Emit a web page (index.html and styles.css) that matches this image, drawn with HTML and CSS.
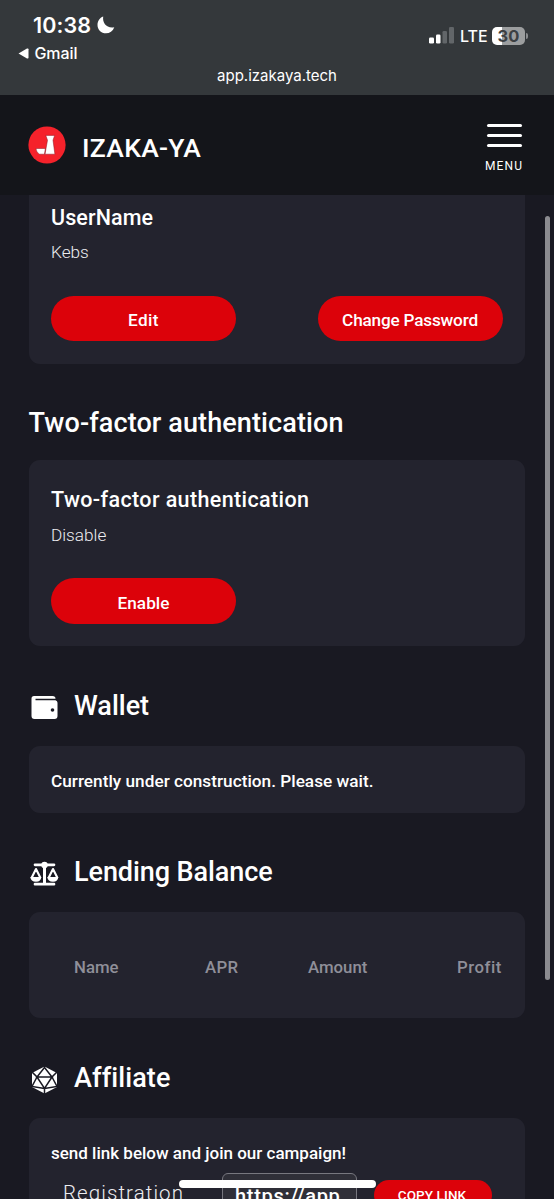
FILE: index.html
```html
<!DOCTYPE html>
<html lang="en">
<head>
<meta charset="utf-8">
<title>IZAKA-YA</title>
<link rel="stylesheet" href="styles.css">
</head>
<body>
<div class="status">
  <div class="status-row">
    <div class="status-left">
      <div class="clock"><span class="time">10:38</span>
        <svg class="moon" width="18" height="18" viewBox="0 0 18 18"><path d="M6.2.5C5.300 7 9.500 12.600 17.300 11.300C15.800 15.300 12.700 17.300 9 17.300C4.200 17.300.5 13.700.5 9C.5 5 2.700 1.800 6.200.5Z" fill="#fff"/></svg>
      </div>
      <div class="back"><svg width="11" height="11" viewBox="0 0 11 11"><path d="M.5 5.500L9 .6Q10.500 0 10.500 1.200V9.800Q10.500 11 9 10.400Z" fill="#fff"/></svg><span class="gmail">Gmail</span></div>
    </div>
    <div class="status-right">
      <svg width="26" height="17" viewBox="0 0 26 17"><g fill="#fff"><rect x="0" y="10.500" width="5" height="6" rx="1.300"/><rect x="7" y="7.500" width="4.500" height="9" rx="1.300"/></g><g fill="#626669"><rect x="13.500" y="4" width="4.500" height="12.500" rx="1.300"/><rect x="20" y="0" width="5" height="16.500" rx="1.300"/></g></svg>
      <span class="lte">LTE</span>
      <div class="battery">30</div><div class="nub"></div>
    </div>
  </div>
  <div class="url">app.izakaya.tech</div>
</div>
<header class="header">
  <div class="brand">
    <svg width="38" height="38" viewBox="0 0 38 38"><circle cx="19" cy="19" r="18.600" fill="#f5222b"/><path d="M17.800 9.400H26.600L25 14.200L26.900 28.200H17L19.500 14.200ZM8 22.500H17.300L16.500 28.200H11.600Q8.300 26.800 8 22.500Z" fill="#fff" stroke="#8c1420" stroke-width=".5"/></svg>
    <span class="brand-name">IZAKA-YA</span>
  </div>
  <div class="menu"><div class="bars"><i></i><i></i><i></i></div><span class="menu-label">MENU</span></div>
</header>
<main>
  <section class="card user">
    <h3>UserName</h3><p class="value">Kebs</p>
    <div class="actions"><button class="btn edit">Edit</button><button class="btn change">Change Password</button></div>
  </section>
  <h2 class="tfa">Two-factor authentication</h2>
  <section class="card tfa-card">
    <h3 class="tfa-sub">Two-factor authentication</h3><p class="value">Disable</p>
    <div class="actions"><button class="btn">Enable</button></div>
  </section>
  <h2 class="with-icon"><svg width="30" height="30" viewBox="0 0 30 30"><path d="M5 3H23.500Q26.500 3 26.500 5.800H6.500V7.300H26.500Q28.500 7.800 28.500 9.800V23Q28.500 26 25.500 26H5.500Q2.500 26 2.500 23V5.500Q2.500 3 5 3Z" fill="#fff"/><circle cx="23.500" cy="17" r="1.800" fill="#191922"/></svg><span class="wallet">Wallet</span></h2>
  <section class="card notice">Currently under construction. Please wait.</section>
  <h2 class="with-icon"><svg width="30" height="30" viewBox="0 0 30 30"><g fill="none" stroke="#fff"><path d="M6 5.800H25M6 25.200H25" stroke-width="2.700" stroke-linecap="round"/><path d="M15.500 5V25" stroke-width="3"/><path d="M2.500 19L7 10L11.500 19M19.500 19L24 10L28.500 19" stroke-width="2.100" stroke-linejoin="round"/></g><g fill="#fff"><circle cx="15.500" cy="6" r="3.200"/><path d="M1.300 18H12.300Q12 22.800 7 22.800Q1.800 22.800 1.300 18ZM18.300 18H29.300Q29 22.800 24 22.800Q18.800 22.800 18.300 18Z"/></g></svg><span class="lending">Lending Balance</span></h2>
  <section class="card balance"><span class="name">Name</span><span class="apr">APR</span><span class="amount">Amount</span><span class="profit">Profit</span></section>
  <h2 class="with-icon"><svg width="30" height="30" viewBox="0 0 30 30"><path d="M15.500 1.500L28 8V22L15.500 28.500L3 22V8Z" fill="#fff"/><path d="M15.500 0V2.500L8 12H23L15.500 2.500M8 12L15.500 23.500L23 12M2 6L8 12L3 21.500L15.500 23.500L28 21.500L23 12L29 6M15.500 23.500V30" fill="none" stroke="#191922" stroke-width="1.500"/></svg><span class="affiliate">Affiliate</span></h2>
  <section class="card campaign">
    <p class="campaign-text">send link below and join our campaign!</p>
    <div class="link-row"><span class="reg">Registration</span><div class="field">https://app</div><button class="copy">COPY LINK</button></div>
  </section>
</main>
<div class="scrollbar"></div>
<div class="home"></div>
</body>
</html>
```
FILE: styles.css
```css
* { box-sizing: border-box; }
html, body { margin: 0; height: 1199px; overflow: hidden; }
body { width: 554px; position: relative; background: #191922; color: #fff; font-family: Roboto, sans-serif; font-weight: 500; }
h2, h3, p { margin: 0; }
button { border: 0; color: #fff; font-family: inherit; font-weight: 500; padding: 0; white-space: nowrap; }
svg { flex: none; }
.status { height: 95px; background: #34383b; font-family: Inter, sans-serif; padding-top: 10px; }
.status-row { display: flex; justify-content: space-between; height: 52px; }
.clock { display: flex; height: 30px; padding-left: 33px; gap: 6px; line-height: 30px; }
.time { width: 58px; font-size: 21.500px; font-weight: 600; letter-spacing: .1px; }
.moon { margin-top: 6px; }
.back { display: flex; align-items: center; padding-left: 18px; gap: 5.500px; height: 26px; line-height: 26px; font-size: 16px; font-weight: 450; letter-spacing: -.1px; }
.status-right { display: flex; align-items: flex-start; padding: 17px 26px 0 0; }
.lte { margin-left: 5px; width: 32px; line-height: 18px; font-size: 16px; }
.battery { width: 33px; height: 18px; border-radius: 5px; background: linear-gradient(to right, #fff 10px, #9c9e9f 10px); color: #3c4043; font-size: 16.500px; font-weight: 700; line-height: 18px; text-align: center; }
.nub { margin: 6px 0 0 1px; width: 2px; height: 6px; border-radius: 0 2px 2px 0; background: #8b8d8f; }
.url { text-align: center; line-height: 20px; margin-top: 4px; font-size: 15px; font-weight: 400; }
.header { height: 100px; background: #14151a; display: flex; justify-content: space-between; padding: 0 31px 0 28px; }
.brand { display: flex; padding-top: 31px; gap: 16px; }
.brand-name { line-height: 40px; padding-top: 2px; font-size: 26.500px; letter-spacing: .3px; }
.menu { width: 38px; padding-top: 28.500px; }
.bars { margin-left: 2px; width: 35px; display: grid; gap: 7px; }
.bars i { height: 3px; border-radius: 2px; background: #fff; }
.menu-label { display: block; margin-top: 10.500px; line-height: 18px; font-size: 12px; font-weight: 400; letter-spacing: 1.100px; }
main { padding: 0 29px 0 28.500px; }
.card { background: #23232e; border-radius: 11px; padding: 0 22.500px; }
.user { height: 168.500px; padding-top: 8px; border-radius: 0 0 11px 11px; }
h3 { font-size: 21.500px; line-height: 30px; font-weight: 500; letter-spacing: .1px; }
.tfa-sub { letter-spacing: .380px; }
.value { margin-top: 7px; line-height: 24px; font-size: 17.200px; font-weight: 300; color: #ededf1; }
.actions { display: flex; justify-content: space-between; margin-top: 31.500px; }
.btn { width: 185px; height: 45.500px; border-radius: 23px; background: #dc020a; padding-top: 4px; font-size: 17.200px; }
.edit { letter-spacing: .4px; }
.change { letter-spacing: -.2px; }
h2 { height: 40px; margin-top: 39.500px; line-height: 40px; font-size: 27px; font-weight: 500; letter-spacing: .1px; white-space: nowrap; }
.tfa-card { margin-top: 17px; height: 186px; padding-top: 24.500px; }
.tfa-card .value { margin-top: 8px; }
.with-icon { display: flex; gap: 15.500px; }
.with-icon svg { margin-top: 7px; }
.wallet { letter-spacing: 0; }
.lending { letter-spacing: -.080px; }
.notice { margin-top: 20.500px; height: 66.500px; padding-top: 23px; line-height: 24px; font-size: 17.200px; letter-spacing: .020px; white-space: nowrap; }
.balance { margin-top: 19.500px; height: 106.500px; padding: 43px 23px 0 45.500px; display: grid; grid-template-columns: 131px 103px 149px 1fr; line-height: 24px; font-size: 16.800px; color: #8f8f99; }
.profit { letter-spacing: .5px; }
.apr { letter-spacing: .3px; }
.campaign { margin-top: 20.500px; height: 150px; padding-top: 22.500px; }
.campaign-text { line-height: 24px; font-size: 17px; white-space: nowrap; }
.link-row { display: flex; padding: 8px 0 0 12px; }
.reg { width: 159px; padding-top: 5px; line-height: 30px; font-size: 20.500px; font-weight: 300; letter-spacing: 1.080px; color: #ededf1; }
.field { width: 135px; height: 50px; border: 1.500px solid #77777f; border-radius: 6px; background: #2f2f38; padding: 7px 0 0 12px; line-height: 30px; font-size: 20px; letter-spacing: .7px; }
.copy { margin: 7px 0 0 17px; width: 118px; height: 30px; border-radius: 16px; background: #dc020a; padding-right: 2px; font-size: 13.500px; letter-spacing: .1px; }
.scrollbar { position: absolute; left: 545px; top: 216px; width: 5px; height: 764px; border-radius: 3px; background: #8b8b90; }
.home { position: absolute; left: 178.500px; top: 1180px; width: 197.500px; height: 7.500px; border-radius: 4px; background: #fff; }
```
